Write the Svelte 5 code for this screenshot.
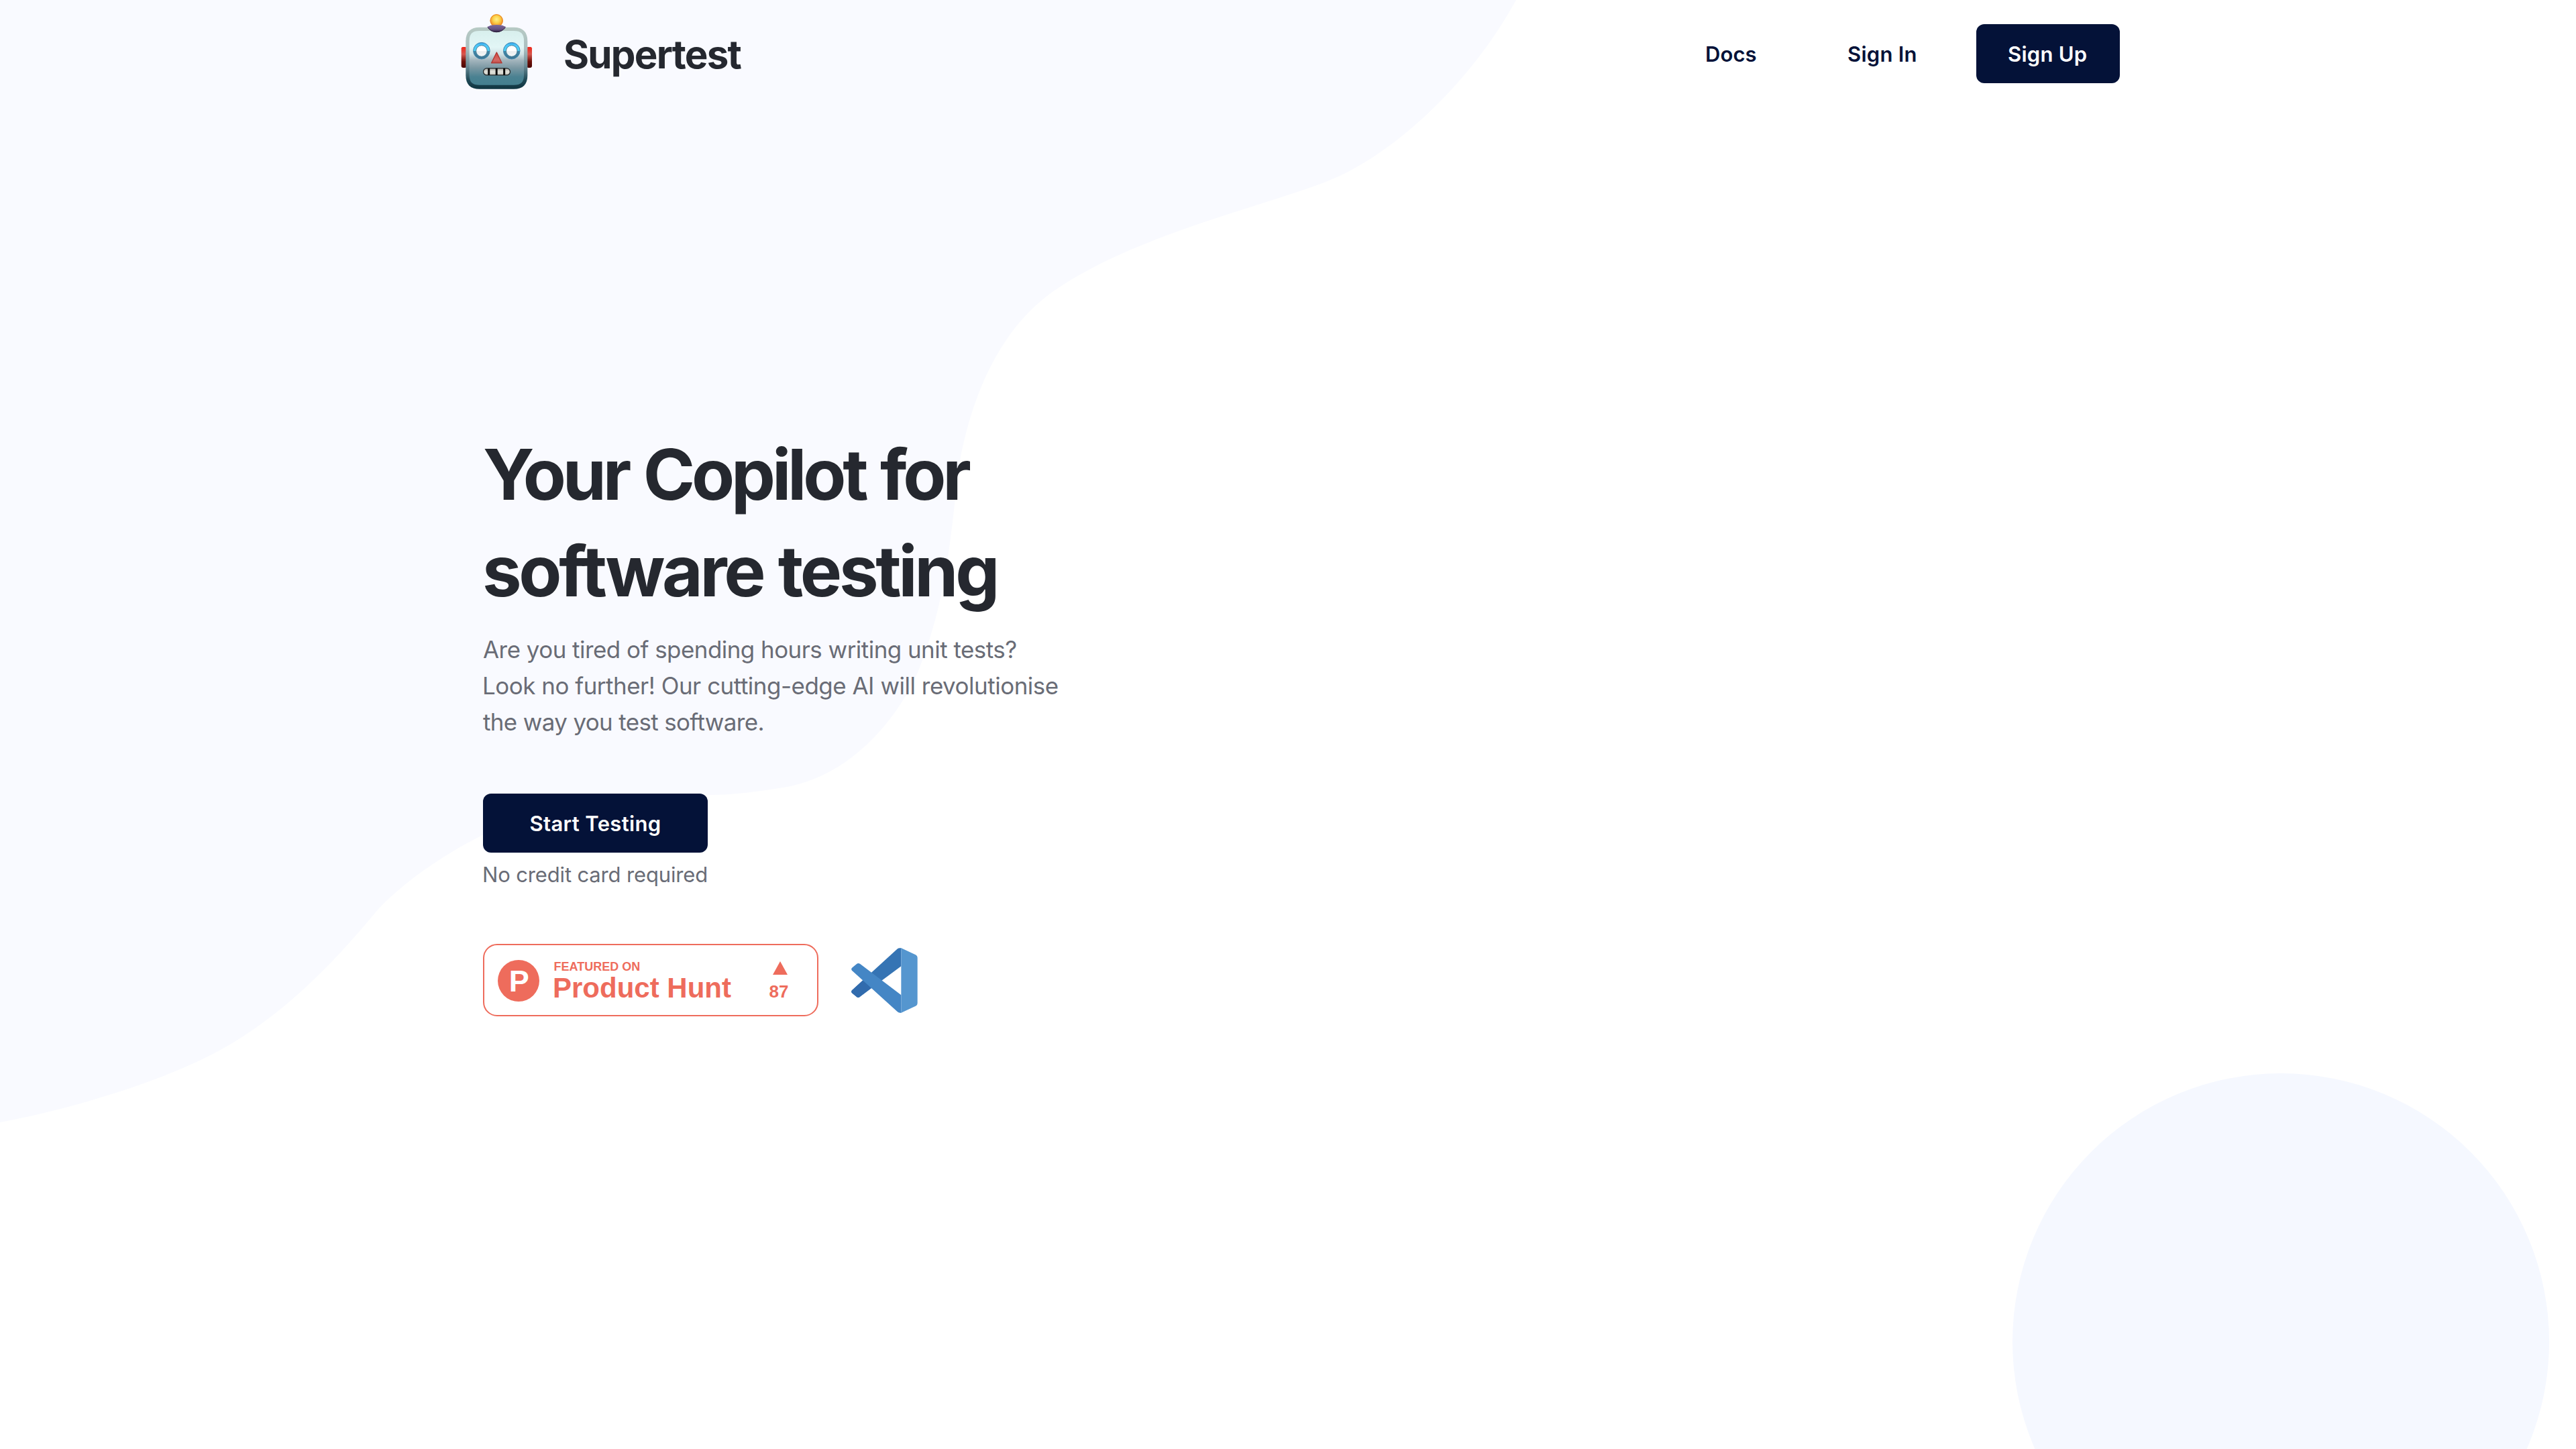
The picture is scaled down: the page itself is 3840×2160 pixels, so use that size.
<script>
  const headline = [
    { text: 'Your Copilot for', cls: 'h-first' },
    { text: 'software testing', cls: 'h-second' }
  ];
  const intro = [
    { text: 'Are you tired of spending hours writing unit tests?', cls: 'p-first' },
    { text: 'Look no further! Our cutting-edge AI will revolutionise', cls: 'p-second' },
    { text: 'the way you test software.', cls: 'p-third' }
  ];
  const eyes = [113, 248];
  const votes = 87;
</script>

<div class="page">
  <svg class="backdrop" viewBox="0 0 3840 2160" aria-hidden="true">
    <path
      fill="#f9faff"
      d="M0 0H2260C2196 118 2080 232 1974 272C1868 312 1690 352 1572 433C1478 498 1445 615 1431.600 683C1417 785 1415 885 1369 1000C1338 1072 1268 1158 1167 1174C1130 1180 1095 1185 1056 1185C920 1186 830 1190 720 1244.600C675 1267 612 1305 564 1355C504 1428 424 1514 325 1567C250 1608 115 1652 0 1673Z"
    />
    <circle cx="3400" cy="2000" r="400" fill="#f5f8ff" />
  </svg>

  <header>
    <a class="brand" href="#top">
      <svg class="robot" viewBox="20 30 322 342" aria-hidden="true">
        <defs>
          <linearGradient id="shell" x1="0" y1="0" x2="0" y2="1">
            <stop offset="0" stop-color="#b7cac4" />
            <stop offset=".35" stop-color="#aabfc0" />
            <stop offset=".62" stop-color="#6b8c97" />
            <stop offset=".85" stop-color="#1f4956" />
            <stop offset="1" stop-color="#0f3440" />
          </linearGradient>
          <linearGradient id="face" x1="0" y1="0" x2="0" y2="1">
            <stop offset="0" stop-color="#d8efed" />
            <stop offset=".3" stop-color="#e2f6f6" />
            <stop offset=".43" stop-color="#d0e1e4" />
            <stop offset=".54" stop-color="#a3b5bd" />
            <stop offset=".68" stop-color="#7b98a3" />
            <stop offset=".85" stop-color="#4a8191" />
            <stop offset="1" stop-color="#437f8f" />
          </linearGradient>
          <linearGradient id="ear" x1="0" y1="0" x2="0" y2="1">
            <stop offset="0" stop-color="#f0271a" />
            <stop offset=".35" stop-color="#d5574f" />
            <stop offset=".7" stop-color="#6d1009" />
            <stop offset="1" stop-color="#4a0603" />
          </linearGradient>
          <radialGradient id="bulb" cx=".5" cy=".4" r=".6">
            <stop offset="0" stop-color="#fff08a" />
            <stop offset=".45" stop-color="#fbd14a" />
            <stop offset=".8" stop-color="#f39a2c" />
            <stop offset="1" stop-color="#ec8420" />
          </radialGradient>
          <linearGradient id="cap" x1="0" y1="0" x2="0" y2="1">
            <stop offset="0" stop-color="#7d6a9c" />
            <stop offset=".6" stop-color="#64507f" />
            <stop offset="1" stop-color="#2b1d3c" />
          </linearGradient>
          <linearGradient id="iris" x1="0" y1="0" x2="0" y2="1">
            <stop offset="0" stop-color="#2f9fe6" />
            <stop offset=".15" stop-color="#4cc4f8" />
            <stop offset=".49" stop-color="#52d4f6" />
            <stop offset=".52" stop-color="#4287a6" />
            <stop offset="1" stop-color="#3c7391" />
          </linearGradient>
          <linearGradient id="pupil" x1="0" y1="0" x2="0" y2="1">
            <stop offset=".5" stop-color="#ffffff" />
            <stop offset=".54" stop-color="#e9edef" />
            <stop offset="1" stop-color="#f6f8f9" />
          </linearGradient>
          <linearGradient id="nose" x1="0" y1="0" x2="0" y2="1">
            <stop offset="0" stop-color="#d8423c" />
            <stop offset=".7" stop-color="#d46a66" />
            <stop offset="1" stop-color="#c04b46" />
          </linearGradient>
          <linearGradient id="teeth" x1="0" y1="0" x2="0" y2="1">
            <stop offset="0" stop-color="#a9aaa3" />
            <stop offset=".5" stop-color="#e3e3dc" />
            <stop offset="1" stop-color="#c4c5bd" />
          </linearGradient>
        </defs>
        <rect x="22" y="180" width="24" height="93" rx="7" fill="url(#ear)" />
        <rect x="315" y="180" width="24" height="93" rx="7" fill="url(#ear)" />
        <path
          fill="url(#shell)"
          d="M104 92H257C298 92 319 113 319 154V307C319 348 298 369 257 369H104C63 369 42 348 42 307V154C42 113 63 92 104 92Z"
        />
        <path
          fill="url(#face)"
          d="M104 108H257C290 108 303 121 303 154V305C303 338 290 351 257 351H104C71 351 58 338 58 305V154C58 121 71 108 104 108Z"
        />
        <circle cx="180" cy="62" r="29" fill="url(#bulb)" />
        <circle cx="180" cy="62" r="27.500" fill="none" stroke="#e8861f" stroke-width="3" />
        <path
          fill="url(#cap)"
          d="M138 90Q146 87 154 83Q180 79 206 83Q214 87 222 90Q206 114 180 114Q154 114 138 90Z"
        />
        <path d="M141 93Q156 113 180 113Q204 113 219 93" fill="none" stroke="#2a1c3a" stroke-width="3" />
        {#each eyes as cx}
          <circle {cx} cy="197" r="37" fill="url(#iris)" stroke="#3f87b0" stroke-width="3" />
          <circle {cx} cy="198" r="25" fill="url(#pupil)" stroke="#437f9c" stroke-width="3" />
        {/each}
        <path
          d="M180.500 204L204 252H157Z"
          fill="url(#nose)"
          stroke="#ad3732"
          stroke-width="4"
          stroke-linejoin="round"
        />
        <rect x="121" y="276" width="120" height="30" rx="15" fill="url(#teeth)" stroke="#24292a" stroke-width="4" />
        <path d="M145.500 276V306M180 276V306M214.500 276V306" stroke="#0b0b0b" stroke-width="9" />
      </svg>
      <span class="name">Supertest</span>
    </a>

    <nav>
      <a class="link docs" href="#docs">Docs</a>
      <a class="link sign-in" href="#sign-in">Sign In</a>
      <a class="link sign-up" href="#sign-up">Sign Up</a>
    </nav>
  </header>

  <main>
    <h1>
      {#each headline as line}<span class={line.cls}>{line.text}</span>{/each}
    </h1>
    <p class="intro">
      {#each intro as line}<span class={line.cls}>{line.text}</span>{/each}
    </p>
    <a class="cta" href="#start">Start Testing</a>
    <p class="note">No credit card required</p>

    <div class="badges">
      <svg class="hunt" viewBox="0 0 500 108" role="img" aria-label="Featured on Product Hunt">
        <rect x="1" y="1" width="498" height="106" rx="20" fill="#fff" stroke="#ee6c5c" stroke-width="2" />
        <circle cx="53" cy="55" r="31" fill="#ee6c5c" />
        <text class="mark" x="38.700" y="71">P</text>
        <text class="small" x="105.500" y="40">FEATURED ON</text>
        <text class="big" x="104" y="80">Product Hunt</text>
        <path d="M443 26L454 46H432Z" fill="#ee6c5c" />
        <text class="count" x="426.500" y="80">{votes}</text>
      </svg>

      <svg class="vscode" viewBox="27 38.500 297 291" role="img" aria-label="Visual Studio Code">
        <path
          fill="#3574b4"
          d="M30 228L233 43Q240 37 250 40V120L66 257Q58 264 50 257L30 240Q25 234 30 228Z"
        />
        <path
          fill="#316bad"
          d="M30 228L78 184L116 218L66 257Q58 264 50 257L30 240Q25 234 30 228Z"
        />
        <path
          fill="#4486c5"
          d="M30 128L50 111Q58 104 66 110L250 249V328Q240 331 232 323L30 140Q25 134 30 128Z"
        />
        <path
          fill="#5596cf"
          d="M244 39Q248 38 252 40L316 70Q323 74 323 82V286Q323 294 316 298L252 328Q248 330 244 329Q250 328 250 322V46Q250 40 244 39Z"
        />
      </svg>
    </div>
  </main>
</div>

<style>
  :global(body) {
    margin: 0;
    background: #fff;
  }

  .page {
    position: relative;
    box-sizing: border-box;
    width: 3840px;
    height: 2160px;
    overflow: hidden;
    background: #fff;
    color: #25282f;
    font-family: Inter, 'Liberation Sans', sans-serif;
    font-kerning: normal;
  }

  .backdrop {
    position: absolute;
    inset: 0;
    width: 100%;
    height: 100%;
  }

  header,
  main {
    position: relative;
  }

  a {
    color: inherit;
    text-decoration: none;
  }

  header {
    display: flex;
    align-items: center;
    justify-content: space-between;
    box-sizing: border-box;
    height: 160px;
    padding: 0 680px 0 687px;
  }

  .brand {
    display: flex;
    align-items: center;
    gap: 46px;
  }

  .robot {
    width: 107px;
    height: 114px;
    margin-bottom: 6px;
  }

  .name {
    padding-top: 1px;
    font-size: 58.2px;
    font-weight: 700;
    line-height: 72px;
    letter-spacing: -1.75px;
  }

  nav {
    display: flex;
    gap: 40px;
    color: #041238;
  }

  .link,
  .cta {
    box-sizing: border-box;
    height: 88px;
    padding-top: 1px;
    border-radius: 12px;
    font-size: 31px;
    font-weight: 600;
    line-height: 88px;
    white-space: nowrap;
  }

  .link {
    padding-left: 48px;
    letter-spacing: 0.25px;
  }

  .docs {
    width: 172px;
    letter-spacing: 0.1px;
  }

  .sign-in {
    width: 200px;
  }

  .sign-up {
    width: 214px;
    padding-left: 47px;
    background: #041238;
    color: #fff;
  }

  main {
    display: flex;
    flex-direction: column;
    align-items: flex-start;
    padding: 475px 0 0 720px;
  }

  h1,
  p {
    margin: 0;
  }

  h1 span,
  .intro span {
    display: block;
    white-space: nowrap;
  }

  h1 {
    font-size: 104.7px;
    font-weight: 700;
    line-height: 144px;
  }

  .h-first {
    letter-spacing: -5.2px;
    word-spacing: 3px;
  }

  .h-second {
    margin-left: -1px;
    letter-spacing: -4.3px;
    word-spacing: 2px;
  }

  .intro {
    margin-top: 18px;
    color: #696c76;
    font-size: 34.9px;
    line-height: 54px;
  }

  .p-first {
    letter-spacing: -0.5px;
  }

  .p-second {
    margin-left: -1px;
    letter-spacing: -0.457px;
  }

  .p-third {
    letter-spacing: -0.61px;
  }

  .cta {
    width: 335px;
    margin-top: 80px;
    background: #041238;
    color: #fff;
    letter-spacing: 0.35px;
    text-align: center;
  }

  .note {
    margin: 9px 0 0 -1px;
    color: #696c76;
    font-size: 31px;
    line-height: 48px;
    letter-spacing: -0.15px;
  }

  .badges {
    display: flex;
    align-items: center;
    gap: 49px;
    margin-top: 79px;
  }

  .hunt {
    width: 500px;
    height: 108px;
  }

  .hunt text {
    fill: #ee6c5c;
    font-family: 'Liberation Sans', Helvetica, sans-serif;
    font-weight: 700;
  }

  .hunt .mark {
    fill: #fff;
    font-size: 45px;
  }

  .hunt .small {
    font-size: 18px;
  }

  .hunt .big {
    font-size: 42px;
  }

  .hunt .count {
    font-size: 26px;
  }

  .vscode {
    width: 99px;
    height: 97px;
  }
</style>
